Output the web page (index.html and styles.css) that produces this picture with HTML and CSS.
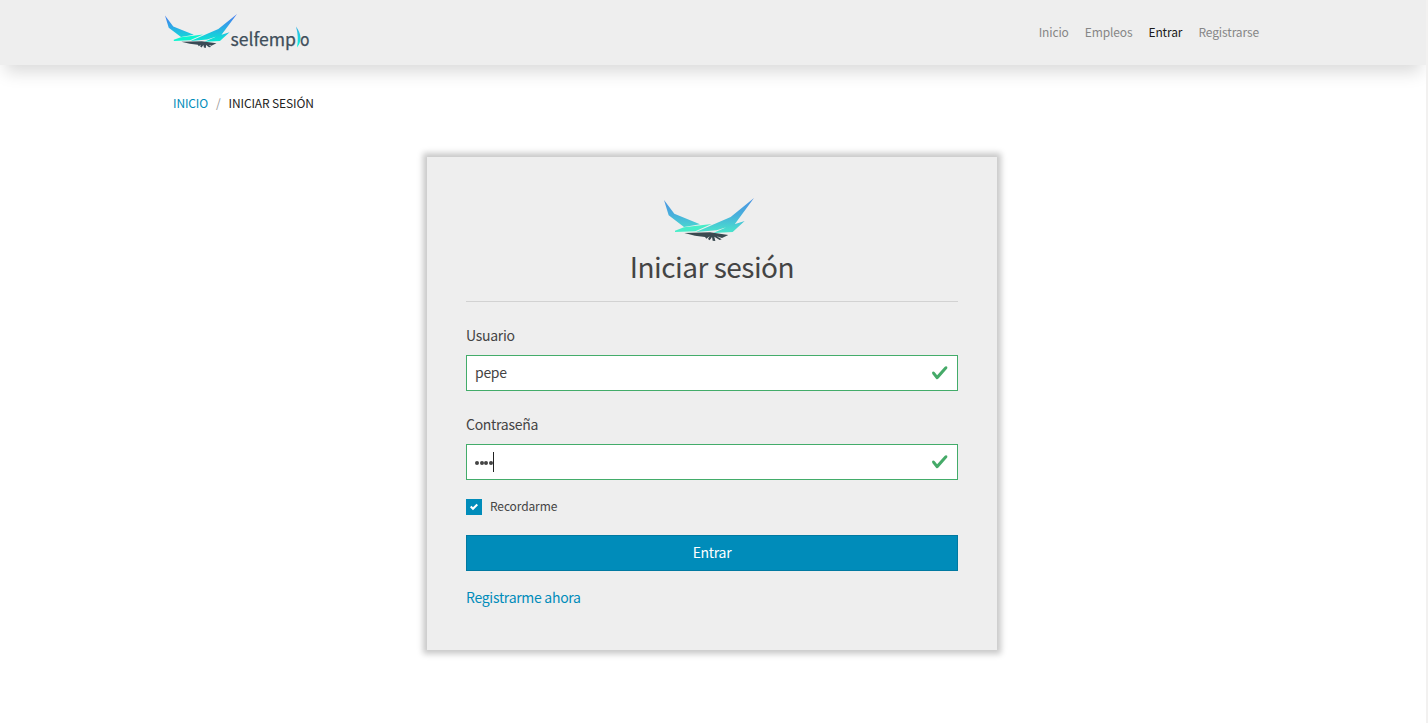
FILE: index.html
```html
<!DOCTYPE html>
<html lang="es">
<head>
<meta charset="utf-8">
<title>Iniciar sesión</title>
<link rel="stylesheet" href="styles.css">
</head>
<body>
<header class="navbar">
  <div class="container navbar-inner">
    <a class="brand">
      <svg class="brand-bird" viewBox="132 24 270 129" preserveAspectRatio="none">
        <defs>
          <linearGradient id="b1" gradientUnits="userSpaceOnUse" x1="0" y1="24" x2="0" y2="126"><stop offset="0" stop-color="#4a78f0"/><stop offset=".5" stop-color="#2cabe6"/><stop offset="1" stop-color="#0be6d4"/></linearGradient>
        </defs>
        <path fill="url(#b1)" d="M132 30L163 71L240 103L192 111L146 76ZM402 24L332 81L228 126L290 121L343 104ZM374 93L329 107L280 129L338 126Z"/>
        <path fill="#0cf5d0" d="M275 102L192 112L165 122V126L226 124Z"/>
        <path fill="#3a4a55" d="M193 129L270 127L325 135L306 144L296 141L305 149L297 150L286 142L285 153L278 151L276 142L269 151L264 147L266 141L259 146L255 141L225 137Z"/>
      </svg>
      <svg class="brand-name" viewBox="0 0 82 32">
        <defs><linearGradient id="leaf" x1="0" y1="0" x2="0" y2="1"><stop offset="0" stop-color="#32aee5"/><stop offset="1" stop-color="#0cf5dc"/></linearGradient></defs>
        <text class="wordmark" x="0.5" y="23" textLength="65.5" lengthAdjust="spacingAndGlyphs">selfemp</text>
        <path fill="url(#leaf)" d="M66 3.5Q74.5 15 67 24.5Q69 14 66 3.5Z"/>
        <text class="wordmark" x="70" y="23" textLength="9.5" lengthAdjust="spacingAndGlyphs">o</text>
      </svg>
    </a>
    <nav class="menu">
      <a>Inicio</a><a>Empleos</a><a class="active">Entrar</a><a>Registrarse</a>
    </nav>
  </div>
</header>
<div class="container">
  <div class="crumbs"><a>INICIO</a><span class="slash">/</span><span>INICIAR SESIÓN</span></div>
</div>
<main class="card">
  <svg class="bird" viewBox="132 24 270 129">
    <defs><linearGradient id="b2" gradientUnits="userSpaceOnUse" x1="0" y1="24" x2="0" y2="126"><stop offset="0" stop-color="#4a90e2"/><stop offset=".5" stop-color="#48b0dc"/><stop offset="1" stop-color="#49e3cc"/></linearGradient></defs>
    <path fill="url(#b2)" d="M132 30L163 71L240 103L192 111L146 76ZM402 24L332 81L228 126L290 121L343 104ZM374 93L329 107L280 129L338 126Z"/>
    <path fill="#48edc9" d="M275 102L192 112L165 122V126L226 124Z"/>
    <path fill="#3a4a50" d="M193 129L270 127L325 135L306 144L290 139L305 148L299 150L283 140L286 153L278 152L276 141L269 151L264 147L269 139L259 146L255 141L225 137Z"/>
  </svg>
  <h1 class="title">Iniciar sesión</h1>
  <form class="form">
    <label class="label">Usuario</label>
    <div class="field"><span class="value">pepe</span><svg class="tick" viewBox="0 0 8 8"><path fill="#45aa68" d="M2.3 6.73L.6 4.53c-.4-1.04.46-1.4 1.1-.8l1.1 1.4 3.4-3.8c.6-.63 1.6-.27 1.2.7l-4 4.6c-.43.5-.8.4-1.1.1z"/></svg></div>
    <label class="label">Contraseña</label>
    <div class="field"><span class="dots"><i></i><i></i><i></i><i></i></span><span class="caret"></span><svg class="tick" viewBox="0 0 8 8"><path fill="#45aa68" d="M2.3 6.73L.6 4.53c-.4-1.04.46-1.4 1.1-.8l1.1 1.4 3.4-3.8c.6-.63 1.6-.27 1.2.7l-4 4.6c-.43.5-.8.4-1.1.1z"/></svg></div>
    <div class="remember"><span class="box"><svg viewBox="0 0 8 8"><path fill="#fff" d="M6.564.75l-3.59 3.612-1.538-1.55L0 4.26 2.974 7.25 8 2.193z"/></svg></span><span class="remember-text">Recordarme</span></div>
    <div class="submit">Entrar</div>
    <a class="register">Registrarme ahora</a>
  </form>
</main>
</body>
</html>
```
FILE: styles.css
```css
* { box-sizing: border-box; }
body { margin: 0; height: 723px; overflow: hidden; background: #fff; border-right: 2px solid #f2f1f0; color: #444; font: 14px/24px "Noto Sans CJK SC", "Noto Sans", sans-serif; letter-spacing: -.29px; }
.navbar { height: 65px; background: #eee; box-shadow: 0 12px 16px -5px rgba(0,0,0,.15); }
.container { width: 1110px; margin: 0 auto; }
.navbar-inner { height: 65px; display: flex; justify-content: space-between; padding: 0 8px; }
.brand { display: flex; margin-left: -1px; }
.brand-bird { width: 72px; height: 34px; margin-top: 14px; }
.brand-name { width: 82px; height: 32px; margin: 23px 0 0 -7px; }
.wordmark { font-family: "Noto Sans CJK SC", sans-serif; font-size: 18px; font-weight: 400; letter-spacing: 0; fill: #3f4f5b; stroke: #3f4f5b; stroke-width: .25px; }
.menu { display: flex; gap: 16px; padding: 20px 1px 0 0; font-size: 12px; letter-spacing: -.12px; color: #868686; }
.active { color: #1a1a1a; }
.crumbs { display: flex; padding: 26px 0 0 15px; font-size: 12px; letter-spacing: -.13px; color: #222; }
.crumbs a { color: #008cba; }
.slash { color: #999; margin: 0 8px; }
.card { width: 570px; height: 493px; margin: 42px auto 0; position: relative; left: -1px; padding: 41px 39px 0; background: #eee; box-shadow: 0 0 6px 4px #c8c8c8; }
.bird { display: block; width: 90px; height: 43px; margin: 0 auto 0 198px; }
.title { margin: 6px 0 25px; height: 55px; border-bottom: 1px solid #d2d2d2; text-align: center; font-size: 28px; letter-spacing: -.5px; font-weight: 400; line-height: 38px; }
.form { display: flex; flex-direction: column; }
.label { height: 31px; line-height: 24px; margin-top: -4px; margin-bottom: 1px; }
.field { display: flex; align-items: center; height: 36px; padding: 0 8px; margin-bottom: 25px; background: #fff; border: 1px solid #43ac6a; }
.value { padding-bottom: 2px; }
.tick { width: 17.5px; height: 17.5px; margin: 0 .5px 0 auto; }
.dots { display: flex; gap: .7px; padding-top: 2px; }
.dots i { width: 4px; height: 4px; border-radius: 50%; background: #444; }
.caret { width: 1px; height: 20px; background: #222; }
.remember { display: flex; align-items: center; gap: 8px; height: 24px; margin-top: -10px; font-size: 12px; letter-spacing: -.12px; }
.remember-text { padding-bottom: 2px; }
.box { display: flex; align-items: center; justify-content: center; width: 16px; height: 16px; background: #008cba; }
.box svg { width: 8px; height: 8px; }
.submit { height: 36px; margin: 16px 0 14px; background: #008cba; border: 1px solid #0079a1; color: #fff; text-align: center; line-height: 32px; }
.register { color: #008cba; }
```
